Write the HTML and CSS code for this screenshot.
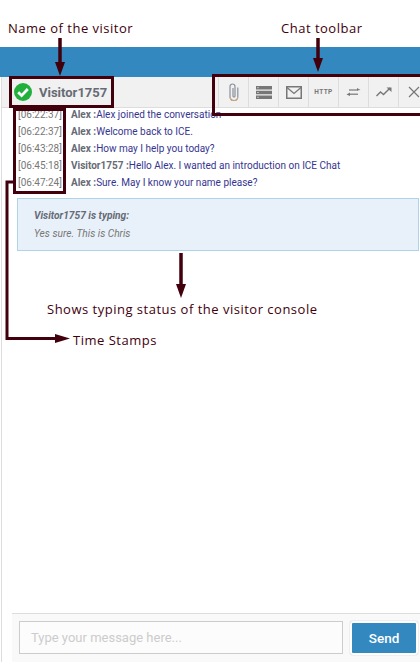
FILE: index.html
```html
<!DOCTYPE html>
<html lang="en">
<head>
<meta charset="utf-8">
<title>Chat console</title>
<link rel="stylesheet" href="styles.css">
</head>
<body>
<div class="page">
  <div class="top-space"></div>
  <div class="blue-bar"></div>
  <main class="panel">
    <header class="chat-head">
      <div class="visitor">
        <svg class="status" width="18" height="18" viewBox="0 0 18 18"><circle cx="9" cy="9" r="9" fill="#22b03c"/><path d="M4.200 9.200l3.400 3.400 6.200-6.600" fill="none" stroke="#fff" stroke-width="2.800"/></svg>
        <span class="visitor-name">Visitor1757</span>
      </div>
      <div class="toolbar">
        <div class="tool"><svg width="12" height="18" viewBox="0 0 12 18"><path d="M9.800 4.500v9.200a3.900 3.900 0 0 1-7.800 0V3.500a2.500 2.500 0 0 1 5 0v9.500a1 1 0 0 1-2 0V5" fill="none" stroke="#8a8f98" stroke-width="1.200"/><path d="M2 14a3.900 3.900 0 0 0 7.800 0" fill="none" stroke="#d9a878" stroke-width="1"/></svg></div>
        <div class="tool"><svg width="16" height="13" viewBox="0 0 16 13"><path d="M0 0h16v3.400H0zM0 4.800h16v3.400H0zM0 9.600h16V13H0z" fill="#777"/><path d="M1.500 1.700h1M1.500 6.500h1M1.500 11.300h1" stroke="#fff"/></svg></div>
        <div class="tool"><svg width="16" height="13" viewBox="0 0 16 13"><rect x=".75" y=".75" width="14.500" height="11.500" fill="none" stroke="#777" stroke-width="1.500"/><path d="M1 1.500l7 6 7-6" fill="none" stroke="#777" stroke-width="1.300"/></svg></div>
        <div class="tool tool-http">HTTP</div>
        <div class="tool"><svg width="15" height="12" viewBox="0 0 15 12"><path d="M3 4h9" stroke="#777" stroke-width="1.200"/><path d="M11 2l3.500 2L11 4.600z" fill="#777"/><path d="M12 8.200H3" stroke="#777" stroke-width="1.200"/><path d="M4 6.600L.5 8.400 4 10z" fill="#777"/></svg></div>
        <div class="tool"><svg width="16" height="10" viewBox="0 0 16 10"><path d="M.5 9l4-4 3 2.500L14 1" fill="none" stroke="#777" stroke-width="1.400"/><path d="M10.500 .4H15.500V5z" fill="#777"/></svg></div>
        <div class="tool"><svg width="12" height="12" viewBox="0 0 12 12"><path d="M1 1l10 10M11 1L1 11" stroke="#777" stroke-width="1.200"/></svg></div>
      </div>
    </header>
    <section class="log">
      <div class="row"><span class="time">[06:22:37]</span><span class="who">Alex :</span><span class="msg">Alex joined the conversation</span></div>
      <div class="row"><span class="time">[06:22:37]</span><span class="who">Alex :</span><span class="msg">Welcome back to ICE.</span></div>
      <div class="row"><span class="time">[06:43:28]</span><span class="who">Alex :</span><span class="msg">How may I help you today?</span></div>
      <div class="row"><span class="time">[06:45:18]</span><span class="who">Visitor1757 :</span><span class="msg">Hello Alex. I wanted an introduction on ICE Chat</span></div>
      <div class="row"><span class="time">[06:47:24]</span><span class="who">Alex :</span><span class="msg">Sure. May I know your name please?</span></div>
    </section>
    <section class="typing">
      <p class="typing-title">Visitor1757 is typing:</p>
      <p class="typing-text">Yes sure. This is Chris</p>
    </section>
    <div class="spacer"></div>
    <footer class="composer">
      <div class="input">Type your message here...</div>
      <button class="send">Send</button>
    </footer>
  </main>

  <svg class="marks" width="420" height="662" viewBox="0 0 420 662">
    <g fill="none" stroke="#41000c">
      <rect x="10.500" y="77.500" width="102" height="29" stroke-width="3"/>
      <rect x="213.500" y="75.500" width="220" height="39" stroke-width="3"/>
      <rect x="14.500" y="109.500" width="50" height="83" stroke-width="3"/>
      <path d="M60 38v31M318 38v29M181 253v34" stroke-width="3.500"/>
      <path d="M14 182H7V338.500H58" stroke-width="3"/>
    </g>
    <g fill="#41000c">
      <path d="M55 62h10L60 76z"/>
      <path d="M313 58h10L318 72z"/>
      <path d="M176 284h10L181 298z"/>
      <path d="M55 334v9L70 338.500z"/>
    </g>
  </svg>
  <span class="note note-name">Name of the visitor</span>
  <span class="note note-toolbar">Chat toolbar</span>
  <span class="note note-typing">Shows typing status of the visitor console</span>
  <span class="note note-time">Time Stamps</span>
</div>
</body>
</html>
```
FILE: styles.css
```css
* { box-sizing: border-box; }
html, body { margin: 0; padding: 0; background: #fff; }
.page {
  position: relative;
  width: 420px;
  height: 662px;
  overflow: hidden;
  display: flex;
  flex-direction: column;
  font-family: Roboto, "Liberation Sans", sans-serif;
}
.top-space { height: 47px; flex: none; }
.blue-bar { height: 30px; flex: none; background: #3389bf; }
.panel {
  flex: 1;
  min-height: 0;
  display: flex;
  flex-direction: column;
  border-left: 1px solid #ddd;
  margin-left: 1px;
}
.chat-head {
  height: 31px;
  flex: none;
  display: flex;
  justify-content: space-between;
  background: #f1f1f1;
  border-bottom: 1px solid #ddd;
  margin-right: -8px;
}
.visitor { display: flex; align-items: center; gap: 7px; padding-left: 12px; }
.visitor-name { font-size: 13px; font-weight: 700; color: #666b75; }
.toolbar { display: flex; }
.tool {
  width: 30px;
  display: flex;
  align-items: center;
  justify-content: center;
  border-left: 1px solid #ddd;
}
.tool-http { font-size: 6.500px; font-weight: 700; color: #777; letter-spacing: .4px; }
.log { margin-top: -2px; flex: none; }
.row {
  height: 17px;
  display: flex;
  align-items: center;
  font-size: 10px;
  white-space: nowrap;
}
.time { width: 53px; padding-left: 16px; color: #777; flex: none; margin-right: 16px; }
.who { font-weight: 700; color: #666b75; }
.msg { color: #35358f; }
.typing {
  flex: none;
  height: 53px;
  margin: 7px 1px 0 15px;
  padding: 11px 16px 0;
  background: #e8f1f9;
  border: 1px solid #afd4ea;
  font-size: 10.200px;
  font-style: italic;
  color: #777;
}
.typing p { margin: 0; }
.typing-title { font-weight: 700; color: #666b75; line-height: 12px; }
.typing .typing-text { margin-top: 6px; line-height: 12px; }
.spacer { flex: 1; }
.composer {
  height: 49px;
  flex: none;
  display: flex;
  align-items: flex-start;
  margin-left: 10px;
  padding: 7px 2px 0 7px;
  gap: 7px;
  background: #f9f9f9;
  border-top: 1px solid #ddd;
}
.input {
  flex: 1;
  height: 33px;
  display: flex;
  align-items: center;
  padding-left: 11px;
  background: #fcfcfc;
  border: 1px solid #ccc;
  font-size: 13px;
  color: #ccc;
}
.send {
  width: 68px;
  height: 34px;
  border: 2px solid #fff;
  border-radius: 3px;
  box-shadow: 0 0 1px #999;
  background: #3389bf;
  color: #fff;
  font: 500 13.500px Roboto, sans-serif;
}
.marks { position: absolute; left: 0; top: 0; pointer-events: none; }
.note {
  position: absolute;
  font-family: "Open Sans", sans-serif;
  font-size: 13px;
  line-height: 18px;
  color: #41000c;
  white-space: nowrap;
  letter-spacing: .5px;
}
.note-name { left: 8px; top: 19px; }
.note-toolbar { left: 281px; top: 19px; }
.note-typing { left: 47px; top: 300px; }
.note-time { left: 73px; top: 331px; }
```
